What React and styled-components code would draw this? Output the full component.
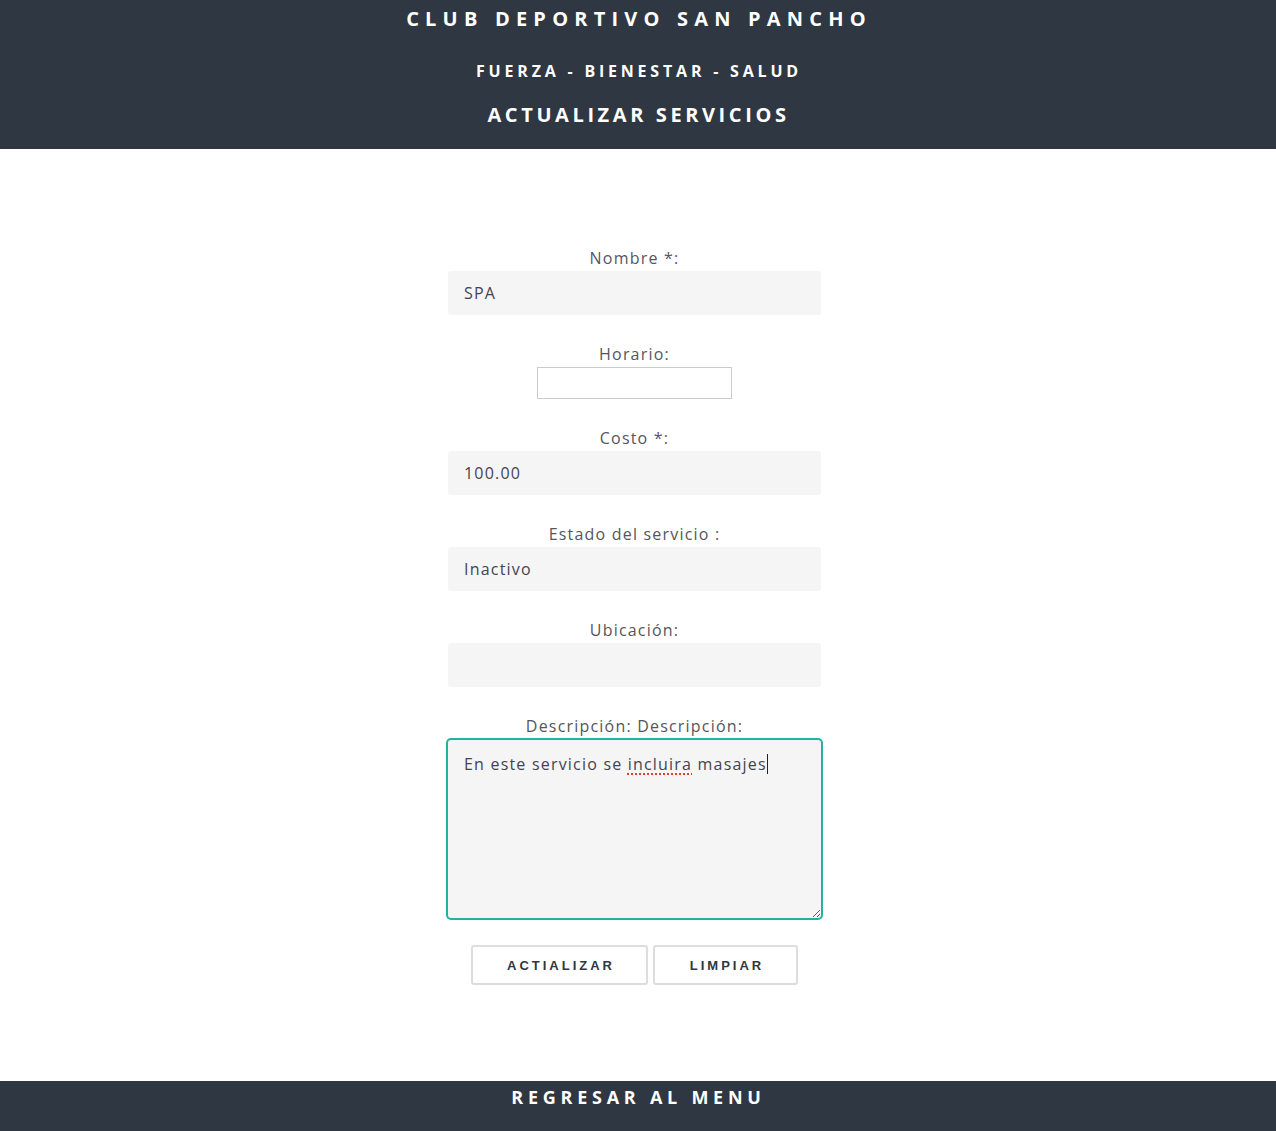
import React from "react";
import styled, { createGlobalStyle } from "styled-components";

const Global = createGlobalStyle`
  html, body { margin: 0; padding: 0; background: #fff; }
  body { font-family: "Open Sans", "Noto Sans", sans-serif; }
  * { box-sizing: border-box; }
`;

const Page = styled.div`
  min-height: 1131px;
  display: flex;
  flex-direction: column;
`;

const Header = styled.header`
  background: #2e3742;
  color: #fff;
  text-align: center;
  padding: 0 0 20px;
  display: flex;
  flex-direction: column;
  align-items: center;
`;

const Title = styled.h1`
  margin: 0;
  font-size: 20px;
  line-height: 38px;
  font-weight: 700;
  letter-spacing: 6.2px;
  padding-left: 2px;
`;

const Subtitle = styled.h2`
  margin: 21px 0 0;
  font-size: 16px;
  line-height: 24px;
  font-weight: 700;
  letter-spacing: 3.8px;
  padding-left: 2px;
`;

const PageTitle = styled.h3`
  margin: 18px 0 0;
  font-size: 20px;
  line-height: 28px;
  font-weight: 700;
  letter-spacing: 3.6px;
  padding-left: 1px;
`;

const Main = styled.main`
  flex: 1;
  padding: 97px 0 95px;
  display: flex;
  justify-content: center;
`;

const Form = styled.form`
  width: 373px;
  margin-right: 7px;
  display: flex;
  flex-direction: column;
  align-items: center;
  gap: 27px;
`;

const Field = styled.div`
  width: 100%;
  display: flex;
  flex-direction: column;
  align-items: center;
`;

const Label = styled.label`
  display: block;
  font-size: 16px;
  line-height: 24px;
  color: #555560;
  letter-spacing: 1.2px;
  margin-bottom: 1px;
`;

const Input = styled.input`
  width: 373px;
  height: 44px;
  border: none;
  border-radius: 3px;
  background: #f5f5f5;
  padding: 0 16px;
  font-family: "Open Sans", sans-serif;
  font-size: 16px;
  letter-spacing: 1.2px;
  color: #444450;
  outline: none;
`;

const PlainInput = styled.input`
  width: 195px;
  height: 32px;
  border: 1px solid #cccccc;
  background: #fff;
  outline: none;
`;

const TextArea = styled.div`
  width: 373px;
  height: 178px;
  margin-top: 1px;
  background: #f5f5f5;
  border-radius: 3px;
  box-shadow: 0 0 0 2px #26b0a0;
  padding: 12px 16px;
  font-size: 16px;
  line-height: 24px;
  letter-spacing: 1.2px;
  color: #444450;
  resize: both;
  overflow: auto;
  text-align: left;
`;

const Misspelled = styled.span`
  text-decoration: underline dotted #e53935;
  text-decoration-thickness: 2px;
  text-underline-offset: 3px;
`;

const Caret = styled.span`
  display: inline-block;
  width: 1px;
  height: 20px;
  background: #222;
  vertical-align: -4px;
`;

const Buttons = styled.div`
  display: flex;
  gap: 5px;
`;

const Button = styled.button`
  width: ${(p) => p.$w}px;
  height: 40px;
  background: #fff;
  border: 2px solid #dddddd;
  border-radius: 3px;
  font-family: "Liberation Sans", Arial, sans-serif;
  font-weight: 700;
  font-size: 13px;
  letter-spacing: 3px;
  color: #2e3742;
  padding: 0 0 0 3px;
  cursor: pointer;
`;

const Footer = styled.footer`
  background: #2e3742;
  color: #fff;
  text-align: center;
  padding: 0 0 18px;
`;

const FooterLink = styled.a`
  display: inline-block;
  font-size: 18px;
  line-height: 32px;
  font-weight: 700;
  letter-spacing: 4.75px;
  color: #fff;
  text-decoration: none;
  padding-left: 1px;
`;

export default function App() {
  return (
    <Page>
      <Global />
      <Header>
        <Title>CLUB DEPORTIVO SAN PANCHO</Title>
        <Subtitle>FUERZA - BIENESTAR - SALUD</Subtitle>
        <PageTitle>ACTUALIZAR SERVICIOS</PageTitle>
      </Header>
      <Main>
        <Form onSubmit={(e) => e.preventDefault()}>
          <Field>
            <Label>Nombre *:</Label>
            <Input defaultValue="SPA" />
          </Field>
          <Field>
            <Label>Horario:</Label>
            <PlainInput />
          </Field>
          <Field>
            <Label>Costo *:</Label>
            <Input defaultValue="100.00" />
          </Field>
          <Field>
            <Label>Estado del servicio :</Label>
            <Input defaultValue="Inactivo" />
          </Field>
          <Field>
            <Label>Ubicación:</Label>
            <Input />
          </Field>
          <Field>
            <Label>Descripción: Descripción:</Label>
            <TextArea role="textbox" aria-multiline="true">
              En este servicio se <Misspelled>incluira</Misspelled> masajes
              <Caret />
            </TextArea>
          </Field>
          <Buttons>
            <Button $w={177} type="submit">ACTIALIZAR</Button>
            <Button $w={145} type="reset">LIMPIAR</Button>
          </Buttons>
        </Form>
      </Main>
      <Footer>
        <FooterLink href="#">REGRESAR AL MENU</FooterLink>
      </Footer>
    </Page>
  );
}
